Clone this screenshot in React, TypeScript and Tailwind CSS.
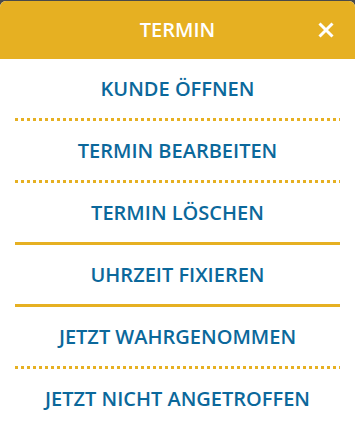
import React from "react";

const items: { label: string; sep: "dotted" | "solid" | null }[] = [
  { label: "KUNDE ÖFFNEN", sep: "dotted" },
  { label: "TERMIN BEARBEITEN", sep: "dotted" },
  { label: "TERMIN LÖSCHEN", sep: "solid" },
  { label: "UHRZEIT FIXIEREN", sep: "solid" },
  { label: "JETZT WAHRGENOMMEN", sep: "dotted" },
  { label: "JETZT NICHT ANGETROFFEN", sep: null },
];

export default function App() {
  return (
    <div
      className="w-[355px] h-[428px] bg-[#4a4a4a] pt-px overflow-hidden"
      style={{ fontFamily: '"Open Sans", "Liberation Sans", sans-serif' }}
    >
      <div className="bg-white rounded-[6px] h-[440px] overflow-hidden">
        <div className="h-[58px] bg-[#e6b022] flex items-center justify-center relative">
          <span className="text-white text-[20px] font-semibold">TERMIN</span>
          <button className="absolute right-[21px] top-[21px] w-4 h-4">
            <svg viewBox="0 0 16 16" width="16" height="16">
              <path d="M1.5 1.5 L14.5 14.5 M14.5 1.5 L1.5 14.5" stroke="white" strokeWidth="3" />
            </svg>
          </button>
        </div>
        {items.map((it) => (
          <div key={it.label}>
            <div className="h-[59px] flex items-center justify-center text-[#0b689b] text-[20px] font-semibold">
              {it.label}
            </div>
            {it.sep === "dotted" && (
              <div className="mx-[15px] h-[3px] bg-[repeating-linear-gradient(90deg,#e6b022_0_3px,transparent_3px_6px)]" />
            )}
            {it.sep === "solid" && <div className="mx-[15px] h-[3px] bg-[#e6b022]" />}
          </div>
        ))}
      </div>
    </div>
  );
}
